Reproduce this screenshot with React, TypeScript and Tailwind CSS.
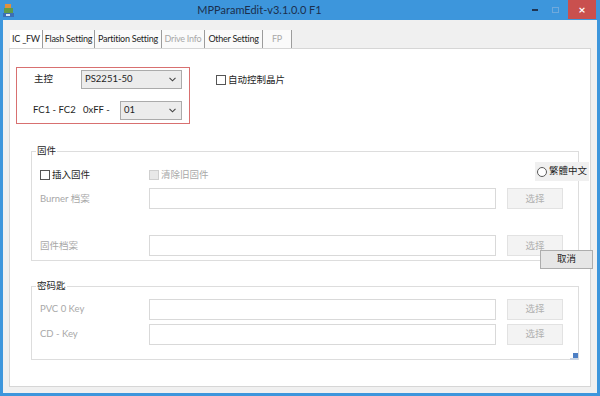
import { ReactNode } from "react";

const FONT = { fontFamily: 'Lato, "Noto Sans CJK SC", sans-serif' };

const tabs = [
  { label: "IC _FW", w: "w-[33px]", active: true },
  { label: "Flash Setting", w: "w-[52px]" },
  { label: "Partition Setting", w: "w-[67px]" },
  { label: "Drive Info", w: "w-[43px]", disabled: true },
  { label: "Other Setting", w: "w-[58px]" },
  { label: "FP", w: "w-[29px]", disabled: true },
];

export default function App() {
  return (
    <div className="flex h-[396px] w-[600px] flex-col bg-[#3d96dc] text-[9.5px] text-[#1e1e1e]" style={FONT}>
      {/* title bar */}
      <div className="relative flex h-[20px] shrink-0 items-center">
        <AppIcon />
        <div className="flex-1 pr-[20px] text-center text-[11px] text-[#1b2f4d]">MPParamEdit-v3.1.0.0 F1</div>
        <div className="flex h-full items-start">
          <div className="flex h-[19px] w-[20px] items-center justify-center">
            <div className="h-[2px] w-[6px] bg-[#1f3553]" />
          </div>
          <div className="flex h-[19px] w-[20px] items-center justify-center">
            <div className="h-[6px] w-[7px] border border-[#6fa9dc]" />
          </div>
          <div className="ml-[3px] mr-[4px] flex h-[19px] w-[28px] items-center justify-center bg-[#c9504e] text-[12px] font-bold leading-none text-white">
            ×
          </div>
        </div>
      </div>

      {/* client area */}
      <div className="mx-[3px] mb-[3px] flex flex-1 flex-col bg-[#f0f0f0] px-[6px] pb-[6px] pt-[10px]">
        {/* tabs */}
        <div className="flex h-[18px] shrink-0 items-stretch">
          {tabs.map((t) => (
            <div
              key={t.label}
              className={`flex items-center justify-center border-r border-[#9c9c9c] ${t.w} ${
                t.active ? "ml-[1px] bg-white" : "bg-[#fafafa]"
              } ${t.disabled ? "text-[#a8a8a8]" : "text-[#1e1e1e]"} text-[9px] tracking-[-0.25px] whitespace-nowrap`}
            >
              {t.label}
            </div>
          ))}
        </div>

        {/* panel */}
        <div className="relative flex-1 border border-[#d6d6d6] bg-white">
          <div className="flex items-start pl-[6px] pt-[18px]">
            <div className="h-[57px] w-[174px] border border-[#d87070] pt-[2px]">
              <div className="flex h-[19px] items-center">
                <span className="w-[64px] pl-[17px]">主控</span>
                <Select value="PS2251-50" w="w-[101px]" />
              </div>
              <div className="mt-[12px] flex h-[19px] items-center">
                <span className="w-[66px] pl-[16px] whitespace-nowrap">FC1 - FC2</span>
                <span className="w-[37px] whitespace-nowrap">0xFF -</span>
                <Select value="01" w="w-[62px]" />
              </div>
            </div>
            <div className="ml-[26px] mt-[6px]">
              <Check label="自动控制晶片" />
            </div>
          </div>

          {/* 固件 */}
          <Group title="固件" className="mt-[27px] h-[110px]">
            <div className="flex pl-[8px] pt-[16px]">
              <div className="w-[109px]">
                <Check label="插入固件" />
              </div>
              <Check label="清除旧固件" disabled />
            </div>
            <div className="mt-[6px]">
              <FileRow label="Burner 档案" />
            </div>
            <div className="mt-[26px]">
              <FileRow label="固件档案" />
            </div>
            <div className="absolute left-[503px] top-[10px] flex h-[19px] items-center gap-[2px] whitespace-nowrap bg-[#f0f0f0] pl-[2px] pr-[2px]">
              <div className="h-[10px] w-[10px] rounded-full border border-[#5a5a5a] bg-white" />
              <span>繁體中文</span>
            </div>
            <div className="absolute left-[508px] top-[98px] flex h-[19px] w-[53px] items-center justify-center border border-[#adadad] bg-[#e6e6e6]">
              取消
            </div>
          </Group>

          {/* 密码匙 */}
          <Group title="密码匙" className="mt-[25px] h-[74px]">
            <div className="pt-[12px]">
              <FileRow label="PVC 0 Key" />
            </div>
            <div className="mt-[4px]">
              <FileRow label="CD - Key" />
            </div>
          </Group>

          <svg className="absolute right-[12px] top-[304px]" width="8" height="8" viewBox="0 0 8 8">
            <rect x="3" y="0" width="5" height="5" fill="#4d7fc4" />
            <rect x="0" y="5" width="8" height="2" fill="#c9d4e3" />
          </svg>
        </div>
      </div>
    </div>
  );
}

function AppIcon() {
  return (
    <svg className="ml-[3px] mt-[1px]" width="11" height="13" viewBox="0 0 11 13">
      <rect x="2" y="0" width="6" height="4" fill="#e0913e" />
      <rect x="1" y="4" width="9" height="5" fill="#5e9b4b" />
      <rect x="0" y="9" width="11" height="4" fill="#3c6fb5" />
      <rect x="3" y="10" width="4" height="2" fill="#d8e6f5" />
    </svg>
  );
}

function Select({ value, w }: { value: string; w: string }) {
  return (
    <div className={`flex h-[19px] items-center justify-between border border-[#ababab] bg-[#ececec] pl-[3px] pr-[5px] ${w}`}>
      <span>{value}</span>
      <svg width="7" height="5" viewBox="0 0 7 5">
        <path d="M0.5 0.8 L3.5 3.8 L6.5 0.8" fill="none" stroke="#444" strokeWidth="1.1" />
      </svg>
    </div>
  );
}

function Check({ label, disabled }: { label: string; disabled?: boolean }) {
  return (
    <div className={`flex items-center gap-[2px] whitespace-nowrap ${disabled ? "text-[#a8a8a8]" : ""}`}>
      <div
        className={`h-[10px] w-[10px] border ${
          disabled ? "border-[#cfcfcf] bg-[#e8e8e8]" : "border-[#555] bg-white"
        }`}
      />
      <span>{label}</span>
    </div>
  );
}

function Group({ title, className, children }: { title: string; className: string; children: ReactNode }) {
  return (
    <div className={`relative ml-[21px] mr-[11px] border border-[#dddddd] ${className}`}>
      <span className="absolute -top-[7px] left-[4px] bg-white px-[1px] leading-[12px]">{title}</span>
      {children}
    </div>
  );
}

function FileRow({ label }: { label: string }) {
  return (
    <div className="flex items-center pl-[8px]">
      <span className="w-[109px] text-[#a8a8a8] whitespace-nowrap">{label}</span>
      <div className="h-[21px] w-[347px] border border-[#d9d9d9] bg-white" />
      <div className="ml-[11px] flex h-[21px] w-[56px] items-center justify-center border border-[#e2e2e2] bg-[#f3f3f3] text-[#b0b0b0]">
        选择
      </div>
    </div>
  );
}
